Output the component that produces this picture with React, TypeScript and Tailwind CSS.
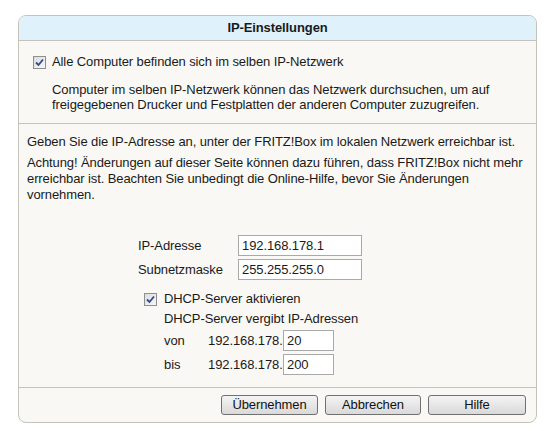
import React from "react"

const Check = () => (
  <span className="inline-flex h-[13px] w-[13px] shrink-0 items-center justify-center border border-[#8e8f8f] bg-gradient-to-br from-[#dcdcdc] to-[#f8f8f8]">
    <svg width="9" height="9" viewBox="0 0 9 9">
      <path d="M1 4.5 L3.5 7 L8 1.5" fill="none" stroke="#2d4896" strokeWidth="1.8" />
    </svg>
  </span>
)

const Field = ({ value, w }: { value: string; w: string }) => (
  <div className={`h-[21px] ${w} border border-[#a9a9a9] bg-white pl-[3px] leading-[19px]`}>{value}</div>
)

const Btn = ({ label, w }: { label: string; w: string }) => (
  <button className={`h-[20px] ${w} rounded-[3px] border border-[#707070] bg-gradient-to-b from-[#f4f4f4] to-[#d9d9d9] text-[13px] leading-[18px] text-[#111]`}>
    {label}
  </button>
)

export default function App() {
  return (
    <div className="min-h-[431px] bg-white pt-[15px] pl-[18px] text-[13px] tracking-[-0.1px] text-[#1a1a1a]" style={{ fontFamily: '"Liberation Sans", Arial, sans-serif' }}>
      <div className="w-[519px] overflow-hidden rounded-[8px] border border-[#c4c4bc] bg-[#f9f8f4]">
        <div className="flex h-[25px] items-center justify-center border-b border-[#c4c4bc] bg-[#dff2fc] font-bold">
          IP-Einstellungen
        </div>

        <div className="border-b border-[#c4c4bc] pt-[13px] pb-[11px] pl-[14px] pr-[10px]">
          <div className="flex h-[16px] items-center gap-[6px]">
            <Check />
            <span>Alle Computer befinden sich im selben IP-Netzwerk</span>
          </div>
          <p className="mt-[12px] pl-[19px] leading-[15px]">
            Computer im selben IP-Netzwerk können das Netzwerk durchsuchen, um auf freigegebenen Drucker und Festplatten der anderen Computer zuzugreifen.
          </p>
        </div>

        <div className="border-b border-[#c4c4bc] pt-[10px] pb-[12px] pl-[8px] pr-[6px]">
          <p className="leading-[16px]">Geben Sie die IP-Adresse an, unter der FRITZ!Box im lokalen Netzwerk erreichbar ist.</p>
          <p className="mt-[5px] leading-[16px]">
            Achtung! Änderungen auf dieser Seite können dazu führen, dass FRITZ!Box nicht mehr erreichbar ist. Beachten Sie unbedingt die Online-Hilfe, bevor Sie Änderungen vornehmen.
          </p>

          <div className="mt-[32px] ml-[111px] grid grid-cols-[100px_124px] gap-y-[3px]">
            <span className="leading-[21px]">IP-Adresse</span>
            <Field value="192.168.178.1" w="w-[124px]" />
            <span className="leading-[21px]">Subnetzmaske</span>
            <Field value="255.255.255.0" w="w-[124px]" />
          </div>

          <div className="mt-[11px] ml-[117px]">
            <div className="flex h-[16px] items-center gap-[7px]">
              <Check />
              <span>DHCP-Server aktivieren</span>
            </div>
            <div className="ml-[20px] mt-[4px] leading-[16px]">DHCP-Server vergibt IP-Adressen</div>
            <div className="ml-[20px] mt-[3px] grid grid-cols-[44px_75px_51px] gap-y-[3px]">
              <span className="leading-[21px]">von</span>
              <span className="leading-[21px]">192.168.178.</span>
              <Field value="20" w="w-[51px]" />
              <span className="leading-[21px]">bis</span>
              <span className="leading-[21px]">192.168.178.</span>
              <Field value="200" w="w-[51px]" />
            </div>
          </div>
        </div>

        <div className="flex h-[34px] items-center justify-end gap-[7px] pr-[10px]">
          <Btn label="Übernehmen" w="w-[97px]" />
          <Btn label="Abbrechen" w="w-[96px]" />
          <Btn label="Hilfe" w="w-[98px]" />
        </div>
      </div>
    </div>
  )
}
